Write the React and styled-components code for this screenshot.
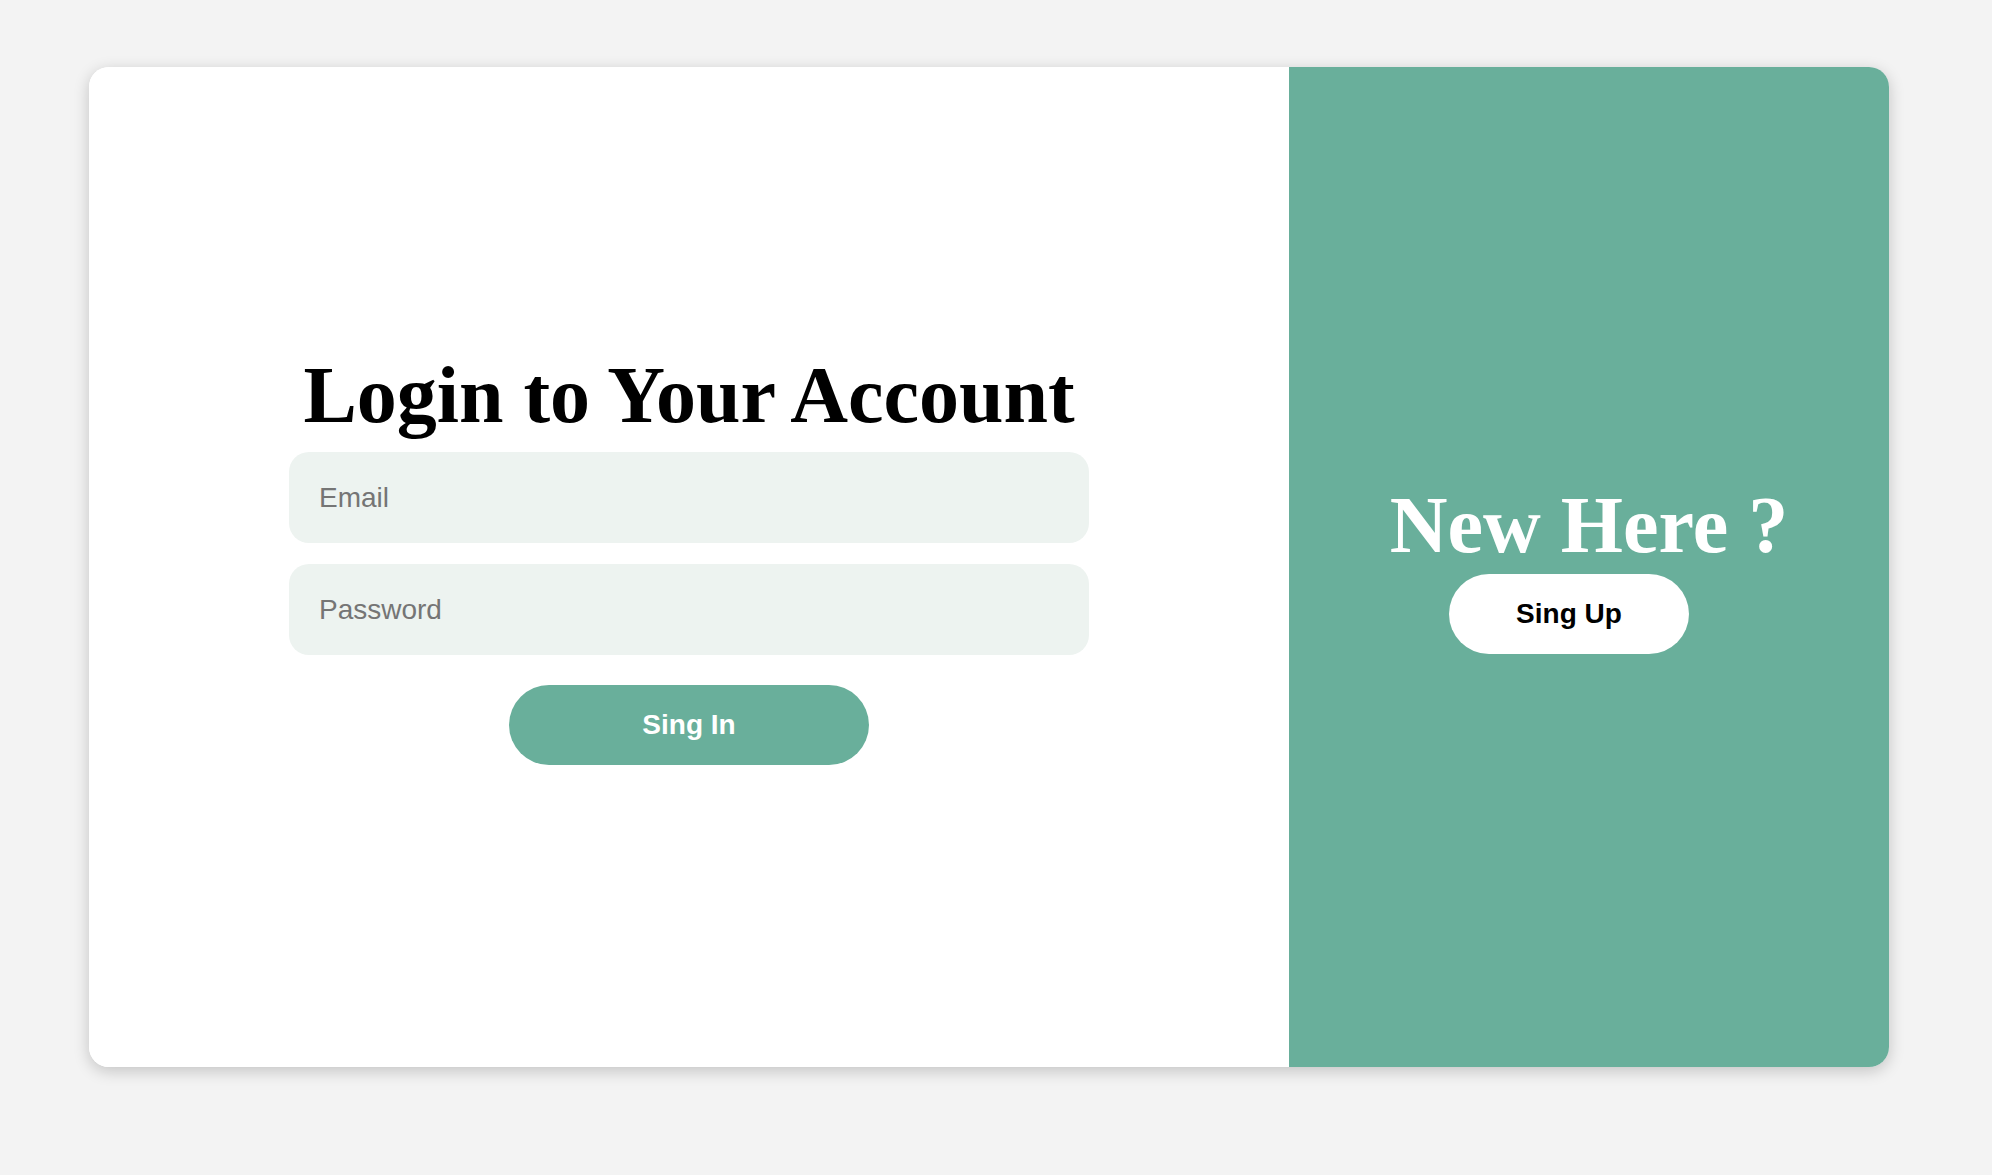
import React from 'react';
import styled, { createGlobalStyle } from 'styled-components';

const GlobalStyle = createGlobalStyle`
    body {
        margin: 0;
        background-color: #f3f3f3;
        font-family: 'Liberation Sans', Arial, sans-serif;
    }
`;

const Page = styled.div`
    display: flex;
    justify-content: center;
    align-items: flex-start;
    min-height: 100vh;
    box-sizing: border-box;
    padding: 67px 14px 0 0;
`;

const Card = styled.div`
    display: flex;
    width: 1800px;
    height: 1000px;
    border-radius: 20px;
    overflow: hidden;
    background-color: #fff;
    box-shadow: 0 4px 16px rgba(0, 0, 0, 0.2);
`;

const Panel = styled.div`
    flex: ${({wide}) => wide ? 2 : 1};
    display: flex;
    flex-direction: column;
    justify-content: center;
    align-items: center;
    background-color: ${({green}) => green ? '#69af9b' : '#fff'};
`;

const Title = styled.h1`
    margin: 0;
    font-family: 'Liberation Serif', 'Times New Roman', serif;
    font-weight: 700;
    font-size: 80px;
    line-height: normal;
    color: ${({light}) => light ? '#fff' : '#000'};
    white-space: nowrap;
`;

const Form = styled.form`
    display: flex;
    flex-direction: column;
    align-items: center;
    margin-bottom: 19px;
`;

const Input = styled.input`
    width: 800px;
    height: 91px;
    box-sizing: border-box;
    margin-top: ${({first}) => first ? '11px' : '21px'};
    padding: 0 30px;
    border: none;
    outline: none;
    border-radius: 20px;
    background-color: #edf3f0;
    font-family: 'Liberation Sans', Arial, sans-serif;
    font-size: 28px;
    color: #333;
    &::placeholder {
        color: #757575;
    }
`;

const Btn = styled.button`
    width: ${({narrow}) => narrow ? '240px' : '360px'};
    height: 80px;
    margin-top: ${({narrow}) => narrow ? '3px' : '30px'};
    margin-right: ${({narrow}) => narrow ? '40px' : '0'};
    border: none;
    border-radius: 40px;
    cursor: pointer;
    font-family: 'Liberation Sans', Arial, sans-serif;
    font-weight: 700;
    font-size: 28px;
    background-color: ${({light}) => light ? '#fff' : '#69af9b'};
    color: ${({light}) => light ? '#000' : '#fff'};
`;

export default function App() {
    return (
        <>
            <GlobalStyle />
            <Page>
                <Card>
                    <Panel wide>
                        <Form onSubmit={(e) => e.preventDefault()}>
                            <Title>Login to Your Account</Title>
                            <Input first type="email" placeholder="Email" />
                            <Input type="password" placeholder="Password" />
                            <Btn type="submit">Sing In</Btn>
                        </Form>
                    </Panel>
                    <Panel green>
                        <Title light>New Here ?</Title>
                        <Btn light narrow type="button">Sing Up</Btn>
                    </Panel>
                </Card>
            </Page>
        </>
    );
}
